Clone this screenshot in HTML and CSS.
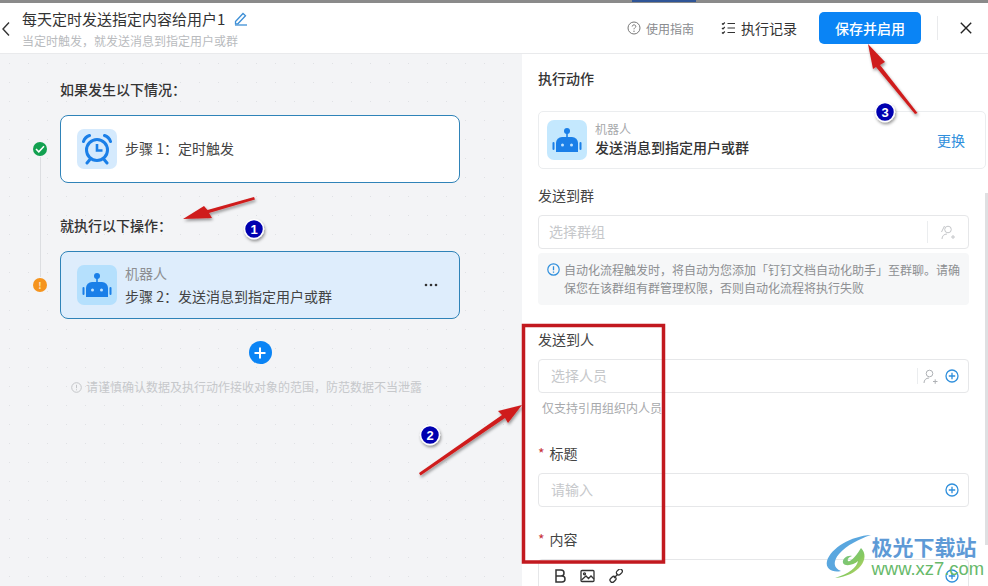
FILE: index.html
```html
<!DOCTYPE html>
<html lang="zh-CN">
<head>
    <meta charset="UTF-8">
    <title>自动化流程</title>
    <link rel="stylesheet" href="styles.css">
</head>
<body>
    <div class="page">
        <div class="topStrip"><span class="stripTab"></span></div>
        <header class="head">
            <svg class="back" width="10" height="16" viewBox="0 0 10 16"><path d="M8 1.500 2 8l6 6.500" fill="none" stroke="#333" stroke-width="1.400"/></svg>
            <div class="headTitle">
                <div class="titleRow">
                    <span class="title">每天定时发送指定内容给用户1</span>
                    <svg width="14" height="15" viewBox="0 0 14 15"><path d="M1.500 10.500 9 2.500l2.500 2.300-7.600 8H1.500z" fill="none" stroke="#3d8fd6" stroke-width="1.300"/><path d="M1 14h12" stroke="#3d8fd6" stroke-width="1.300"/></svg>
                </div>
                <div class="subTitle">当定时触发，就发送消息到指定用户或群</div>
            </div>
            <div class="headRight">
                <svg width="14" height="14" viewBox="0 0 14 14"><circle cx="7" cy="7" r="6" fill="none" stroke="#777" stroke-width="1"/><path d="M5.200 5.500C5.300 3.200 8.900 3.400 8.800 5.500 8.700 6.800 7 6.800 7 8.300" fill="none" stroke="#777"/><circle cx="7" cy="10.200" r=".7" fill="#777"/></svg>
                <span class="guide">使用指南</span>
                <svg class="recIcon" width="14" height="14" viewBox="0 0 14 14"><path d="M1 2.500 2 3.500 3.800 1.500M1 7 2 8 3.800 6M1 11.500 2 12.500 3.800 10.500M6.500 2.500H14M6.500 7H14M6.500 11.500H14" fill="none" stroke="#333" stroke-width="1.200"/></svg>
                <span class="record">执行记录</span>
                <button class="saveBtn">保存并启用</button>
                <span class="headLine"></span>
                <svg class="closeIcon" width="12" height="12" viewBox="0 0 12 12"><path d="M.8.8l10.400 10.400M11.200.8.800 11.200" stroke="#222" stroke-width="1.400"/></svg>
            </div>
        </header>

        <div class="main">
            <section class="flow">
                <h3 class="flowTitle">如果发生以下情况：</h3>
                <div class="stepRow">
                    <span class="dot dotOk"><svg width="10" height="8" viewBox="0 0 10 8"><path d="M1 4l2.800 2.800L9 1.200" fill="none" stroke="#fff" stroke-width="1.500"/></svg></span>
                    <div class="card">
                        <span class="cardIcon clockBg">
                            <svg width="32" height="32" viewBox="0 0 32 32" fill="none" stroke="#1a7fe8" stroke-width="3"><circle cx="16" cy="17" r="10.500"/><path d="M16 11v6.500h5.500" stroke-width="2.600"/><path d="M2.500 8.500C3.500 5.500 5.500 3.500 8.500 2.500M29.500 8.500C28.500 5.500 26.500 3.500 23.500 2.500M8.500 27 6 30M23.500 27 26 30" stroke-linecap="round"/></svg>
                        </span>
                        <div class="cardText oneLine">步骤 1：定时触发</div>
                    </div>
                </div>
                <h3 class="flowTitle second">就执行以下操作：</h3>
                <div class="stepRow">
                    <span class="dot dotWarn">!</span>
                    <div class="card active">
                        <span class="cardIcon robotBg">
                            <svg width="32" height="32" viewBox="0 0 32 32" fill="#1a7fe8"><circle cx="16" cy="7" r="3"/><rect x="15.200" y="8" width="1.600" height="6"/><path d="M11 13h10a6 6 0 0 1 6 6v9H5v-9a6 6 0 0 1 6-6z"/><rect x="1.500" y="18" width="2" height="8" rx="1"/><rect x="28.500" y="18" width="2" height="8" rx="1"/><circle cx="11.500" cy="21" r="1.500" fill="#bfe3ff"/><circle cx="20.500" cy="21" r="1.500" fill="#bfe3ff"/></svg>
                        </span>
                        <div class="cardText">
                            <div class="cardSmall">机器人</div>
                            <div>步骤 2：发送消息到指定用户或群</div>
                        </div>
                        <svg class="more" width="14" height="4" viewBox="0 0 14 4" fill="#333"><circle cx="2" cy="2" r="1.300"/><circle cx="7" cy="2" r="1.300"/><circle cx="12" cy="2" r="1.300"/></svg>
                    </div>
                </div>
                <div class="addWrap">
                    <span class="addBtn"><svg width="12" height="12" viewBox="0 0 12 12"><path d="M6 .5v11M.5 6h11" stroke="#fff" stroke-width="2"/></svg></span>
                </div>
                <div class="tip">
                    <svg width="11" height="11" viewBox="0 0 11 11"><circle cx="5.500" cy="5.500" r="4.800" fill="none" stroke="#c4c6c9"/><path d="M5.500 2.800v3.400M5.500 7.300v1" stroke="#c4c6c9"/></svg>
                    <span>请谨慎确认数据及执行动作接收对象的范围，防范数据不当泄露</span>
                </div>
            </section>

            <section class="form">
                <h3 class="formHead">执行动作</h3>
                <div class="actionCard">
                    <span class="cardIcon actionBg">
                        <svg width="32" height="32" viewBox="0 0 32 32" fill="#1a7fe8"><circle cx="16" cy="7" r="3"/><rect x="15.200" y="8" width="1.600" height="6"/><path d="M11 13h10a6 6 0 0 1 6 6v9H5v-9a6 6 0 0 1 6-6z"/><rect x="1.500" y="18" width="2" height="8" rx="1"/><rect x="28.500" y="18" width="2" height="8" rx="1"/><circle cx="11.500" cy="21" r="1.500" fill="#bfe3ff"/><circle cx="20.500" cy="21" r="1.500" fill="#bfe3ff"/></svg>
                    </span>
                    <div class="actionText">
                        <div class="actionSmall">机器人</div>
                        <div class="actionName">发送消息到指定用户或群</div>
                    </div>
                    <span class="change">更换</span>
                </div>

                <div class="label first">发送到群</div>
                <div class="input groupInput">
                    <span class="ph">选择群组</span>
                    <span class="inputLine"></span>
                    <svg width="16" height="15" viewBox="0 0 16 15" fill="none" stroke="#c4c6c9"><circle cx="8" cy="4.500" r="3.300"/><path d="M2 14c0-3 2-5 5-5M4.500 1 1.500 7M11 12h4M13 10v4"/></svg>
                </div>
                <div class="notice">
                    <svg width="13" height="13" viewBox="0 0 13 13"><circle cx="6.500" cy="6.500" r="5.700" fill="none" stroke="#2f8fdc" stroke-width="1.200"/><path d="M6.500 3.300v4M6.500 8.400v1.300" stroke="#2f8fdc" stroke-width="1.300"/></svg>
                    <p>自动化流程触发时，将自动为您添加「钉钉文档自动化助手」至群聊。请确保您在该群组有群管理权限，否则自动化流程将执行失败</p>
                </div>

                <div class="label toPerson">发送到人</div>
                <div class="input inset">
                    <span class="ph">选择人员</span>
                    <span class="inputLine shortLine"></span>
                    <svg class="personIcon" width="15" height="15" viewBox="0 0 15 15" fill="none" stroke="#aeb1b5"><circle cx="6.500" cy="4.500" r="3.300"/><path d="M1 14c0-3 2-5 5-5M10 12.500h4.500M12.200 10.300v4.500"/></svg>
                    <svg width="14" height="14" viewBox="0 0 14 14"><circle cx="7" cy="7" r="6" fill="none" stroke="#2f8fdc" stroke-width="1.300"/><path d="M7 3.800v6.400M3.800 7h6.400" stroke="#2f8fdc" stroke-width="1.300"/></svg>
                </div>
                <div class="hint">仅支持引用组织内人员</div>

                <div class="label titleLabel"><i>*</i>标题</div>
                <div class="input inset">
                    <span class="ph">请输入</span>
                    <svg width="14" height="14" viewBox="0 0 14 14"><circle cx="7" cy="7" r="6" fill="none" stroke="#2f8fdc" stroke-width="1.300"/><path d="M7 3.800v6.400M3.800 7h6.400" stroke="#2f8fdc" stroke-width="1.300"/></svg>
                </div>

                <div class="label contentLabel"><i>*</i>内容</div>
                <div class="editor">
                    <svg width="12" height="14" viewBox="0 0 12 14" fill="none" stroke="#333" stroke-width="1.500"><path d="M2 1h5a3 3 0 0 1 0 6H2zM2 7h6a3 3 0 0 1 0 6H2z"/></svg>
                    <svg width="15" height="14" viewBox="0 0 15 14" fill="none" stroke="#333" stroke-width="1.300"><rect x="1" y="1.500" width="13" height="11" rx="1"/><path d="M1.500 11 6 7l2.500 2.500L11 7l3 3"/><circle cx="4.500" cy="4.800" r="1"/></svg>
                    <svg width="14" height="14" viewBox="0 0 14 14" fill="none" stroke="#333" stroke-width="1.300"><rect x="7" y="1" width="6.500" height="4.500" rx="2.200" transform="rotate(-45 10 3)"/><rect x=".500" y="8" width="6.500" height="4.500" rx="2.200" transform="rotate(-45 4 10)"/><path d="M5 9l4-4"/></svg>
                    <svg class="editorAdd" width="14" height="14" viewBox="0 0 14 14"><circle cx="7" cy="7" r="6" fill="none" stroke="#2f8fdc" stroke-width="1.300"/><path d="M7 3.800v6.400M3.800 7h6.400" stroke="#2f8fdc" stroke-width="1.300"/></svg>
                </div>
            </section>
            <div class="scrollBar"></div>
        </div>

        <!-- annotations on top of the screenshot -->
        <svg class="marks" width="988" height="586" viewBox="0 0 988 586">
            <defs>
                <filter id="sh" x="-30%" y="-30%" width="160%" height="160%"><feDropShadow dx="1" dy="2" stdDeviation="1.500" flood-color="#000" flood-opacity=".4"/></filter>
            </defs>
            <rect x="523.500" y="325.500" width="140" height="236.500" fill="none" stroke="#c2191f" stroke-width="3.500"/>
            <g fill="#cf1c1c" filter="url(#sh)">
                <path d="M254 197 255 199.500 209 213 212 218 183 219 204 206 207.500 210z"/>
                <path d="M419 473 420.500 475.500 505 418 508 423 522 405 498 411 502 415z"/>
                <path d="M915 114 917.500 113 880 65 885 62 868 44 873 69 876 67z"/>
            </g>
            <g filter="url(#sh)">
                <circle cx="254" cy="229" r="9.500" fill="#0000b0" stroke="#fff" stroke-width="1.500"/>
                <circle cx="430" cy="435" r="9.500" fill="#0000b0" stroke="#fff" stroke-width="1.500"/>
                <circle cx="885" cy="112" r="9.500" fill="#0000b0" stroke="#fff" stroke-width="1.500"/>
            </g>
            <g class="markNum">
                <text x="254" y="234">1</text>
                <text x="430" y="440">2</text>
                <text x="885" y="117">3</text>
            </g>
        </svg>

        <div class="water">
            <svg width="50" height="46" viewBox="0 0 50 46" fill="none">
                <defs>
                    <linearGradient id="wg" x1="0" y1="0" x2="1" y2="1"><stop offset="0" stop-color="#6cc0a0"/><stop offset=".6" stop-color="#86c95f"/><stop offset="1" stop-color="#e3dd6a"/></linearGradient>
                </defs>
                <path d="M46 1C26 2 6 14 2 27c-2 8 6 12 14 10C8 34 8 27 14 20 22 11 34 5 46 1z" fill="#5aa7df"/>
                <path d="M36 14c10 10-2 28-26 30 14-4 22-11 23-17-4 4-13 6-15 2-1-4 4-8 9-7-3 1-5 3-4 5 2 2 9-6 13-13z" fill="url(#wg)"/>
            </svg>
            <div class="waterText">
                <div class="waterName">极光下载站</div>
                <div class="waterUrl">www.xz7.com</div>
            </div>
        </div>
    </div>
</body>
</html>
```
FILE: styles.css
```css
html, body {
    margin: 0;
    padding: 0;
    overflow: hidden;
}

body {
    font-family: "Noto Sans CJK SC", "Liberation Sans", sans-serif;
    color: #333;
}

.page {
    position: relative;
    width: 988px;
    height: 586px;
    overflow: hidden;
    display: flex;
    flex-direction: column;
    background: #fff;
}

.topStrip {
    height: 3px;
    background: #8a8a8a;
    flex: none;
    padding-left: 632px;
}

.stripTab {
    display: block;
    width: 64px;
    height: 2px;
    background: #2f5597;
}

.head {
    height: 51px;
    flex: none;
    box-sizing: border-box;
    border-bottom: 1px solid #e9eaec;
    display: flex;
    align-items: center;
    padding: 0 16px 0 1px;
}

.back {
    margin-right: 11px;
    margin-top: 2px;
}

.titleRow {
    display: flex;
    align-items: center;
    gap: 9px;
    height: 22px;
}

.title {
    font-size: 15px;
    color: #333;
}

.subTitle {
    font-size: 12px;
    line-height: 16px;
    margin-top: 4px;
    color: #b9bbbe;
}

.headRight {
    margin-left: auto;
    display: flex;
    align-items: center;
}

.guide {
    font-size: 12px;
    color: #8a8c8f;
    margin-left: 5px;
}

.recIcon {
    margin-left: 27px;
}

.record {
    font-size: 14px;
    color: #333;
    margin-left: 6px;
}

.saveBtn {
    width: 102px;
    height: 32px;
    margin-left: 22px;
    border: none;
    border-radius: 5px;
    background: #0a84f5;
    color: #fff;
    font-family: inherit;
    font-size: 14px;
    font-weight: 500;
    padding: 0;
}

.headLine {
    width: 1px;
    height: 24px;
    background: #e9eaec;
    margin-left: 16px;
}

.closeIcon {
    margin-left: 22px;
}

.main {
    flex: 1;
    display: flex;
    min-height: 0;
    position: relative;
}

.flow {
    width: 522px;
    flex: none;
    box-sizing: border-box;
    padding: 24px 62px 0 33px;
    background-color: #f3f4f6;
    background-image: radial-gradient(#dfe1e4 0.8px, transparent 1px);
    background-size: 19px 19px;
}

.flowTitle {
    margin: 0 0 15px 27px;
    font-size: 14px;
    line-height: 22px;
    font-weight: 500;
    color: #333;
}

.second {
    margin-top: 31px;
    margin-bottom: 15px;
}

.stepRow {
    display: flex;
    align-items: center;
    position: relative;
}

.stepRow:first-of-type::after {
    content: "";
    position: absolute;
    left: 7px;
    top: 42px;
    width: 1px;
    height: 120px;
    background: #dcdee1;
}

.dot {
    width: 14px;
    height: 14px;
    border-radius: 50%;
    flex: none;
    margin-right: 13px;
    display: flex;
    align-items: center;
    justify-content: center;
    color: #fde3bd;
    font-size: 9px;
    font-weight: 700;
    position: relative;
    z-index: 1;
}

.dotOk {
    background: #12a150;
}

.dotWarn {
    background: #f5941d;
}

.card {
    flex: 1;
    height: 68px;
    box-sizing: border-box;
    border: 1px solid #2f83b8;
    border-radius: 8px;
    background: #fff;
    display: flex;
    align-items: center;
    padding: 0 21px 0 16px;
    gap: 8px;
}

.card.active {
    background: #deedfc;
}

.cardIcon {
    width: 40px;
    height: 40px;
    border-radius: 7px;
    flex: none;
    display: flex;
    align-items: center;
    justify-content: center;
}

.clockBg {
    background: #d5eafd;
}

.robotBg {
    background: #b5e0fd;
}

.actionBg {
    background: #c4e8fe;
}

.cardText {
    font-size: 14px;
    line-height: 23px;
    color: #444;
}

.oneLine {
    padding-bottom: 2px;
}

.cardSmall {
    color: #8d8f92;
}

.more {
    margin-left: auto;
}

.addWrap {
    display: flex;
    justify-content: center;
    padding-left: 27px;
    margin-top: 22px;
}

.addBtn {
    width: 23px;
    height: 23px;
    border-radius: 50%;
    background: #0a84f5;
    display: flex;
    align-items: center;
    justify-content: center;
}

.tip {
    display: flex;
    align-items: center;
    justify-content: center;
    gap: 4px;
    margin-top: 15px;
    font-size: 12px;
    line-height: 16px;
    color: #c6c8cb;
    white-space: nowrap;
}

.form {
    flex: 1;
    min-width: 0;
    box-sizing: border-box;
    padding: 14px 19px 0 16px;
    overflow: hidden;
}

.formHead {
    margin: 0;
    font-size: 14px;
    line-height: 20px;
    font-weight: 500;
    color: #333;
}

.actionCard {
    width: 448px;
    height: 58px;
    box-sizing: border-box;
    margin-top: 23px;
    border: 1px solid #ebedef;
    border-radius: 5px;
    display: flex;
    align-items: center;
    padding: 0 20px 0 8px;
}

.actionText {
    margin: -3px 0 0 8px;
}

.actionSmall {
    font-size: 12px;
    line-height: 17px;
    color: #a7a9ac;
}

.actionName {
    font-size: 14px;
    line-height: 20px;
    font-weight: 500;
    color: #333;
}

.change {
    margin-left: auto;
    font-size: 14px;
    color: #2f8fdc;
}

.label {
    font-size: 14px;
    line-height: 16px;
    color: #444;
}

.label i {
    font-style: normal;
    color: #c8323a;
    margin-right: 5px;
}

.first {
    margin-top: 18px;
}

.toPerson {
    margin-top: 26px;
}

.titleLabel {
    margin-top: 29px;
}

.contentLabel {
    margin-top: 24px;
}

.input {
    width: 431px;
    height: 34px;
    box-sizing: border-box;
    margin-top: 12px;
    border: 1px solid #e6e7e9;
    border-radius: 4px;
    display: flex;
    align-items: center;
    padding: 0 9px 0 10px;
    font-size: 14px;
}

.groupInput {
    padding-right: 12px;
}

.inset {
    padding-left: 12px;
}

.ph {
    color: #c6c8cb;
    padding-bottom: 2px;
}

.inputLine {
    width: 1px;
    height: 22px;
    background: #ebedef;
    margin-left: auto;
    margin-right: 12px;
}

.shortLine {
    height: 16px;
    margin-right: 5px;
}

.input > svg:last-child {
    flex: none;
}

.input > .ph:first-child + svg {
    margin-left: auto;
}

.personIcon {
    margin-right: 7px;
}

.notice {
    width: 431px;
    box-sizing: border-box;
    margin-top: 4px;
    padding: 8px 8px 8px 9px;
    border-radius: 4px;
    background: #f6f7f8;
    display: flex;
    gap: 4px;
    font-size: 12px;
    line-height: 18px;
    color: #8d8f92;
}

.notice svg {
    flex: none;
    margin-top: 2px;
}

.notice p {
    margin: 0;
}

.hint {
    margin: 7px 0 0 4px;
    font-size: 12px;
    line-height: 16px;
    color: #a7a9ac;
}

.editor {
    width: 431px;
    height: 40px;
    box-sizing: border-box;
    margin-top: 12px;
    padding: 9px 9px 0 15px;
    border: 1px solid #e6e7e9;
    border-radius: 4px 4px 0 0;
    display: flex;
    align-items: flex-start;
    gap: 14px;
}

.editorAdd {
    margin-left: auto;
}

.scrollBar {
    position: absolute;
    right: 0;
    top: 139px;
    bottom: 41px;
    width: 3px;
    background: #dfe0e2;
}

.marks {
    position: absolute;
    left: 0;
    top: 0;
    pointer-events: none;
}

.markNum text {
    font-family: "Liberation Sans", sans-serif;
    font-size: 13px;
    font-weight: 700;
    fill: #fff;
    text-anchor: middle;
}

.water {
    position: absolute;
    right: 4px;
    bottom: 6px;
    display: flex;
    align-items: center;
    gap: 0;
}

.water svg {
    margin-right: -3px;
}

.waterName {
    font-size: 21px;
    line-height: 24px;
    font-weight: 700;
    color: #5e9ad6;
}

.waterUrl {
    font-family: "Liberation Sans", sans-serif;
    font-size: 18.400px;
    line-height: 22px;
    color: #67b96a;
}
```
